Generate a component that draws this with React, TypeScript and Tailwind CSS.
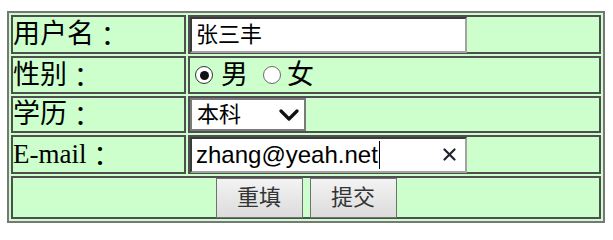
import React from "react";

const labelFont = { fontFamily: '"Liberation Serif", "Noto Sans CJK SC", serif' };
const colonFont = { fontFamily: '"Noto Sans CJK TC", "Noto Sans CJK SC", serif' };
const inputFont = { fontFamily: '"Liberation Sans", "Noto Sans CJK SC", sans-serif' };

function Label({ text }: { text: string }) {
  return (
    <div className="flex h-full w-[171px] items-center text-[27px] leading-none text-black" style={labelFont}>
      <span>{text}</span>
      <span style={colonFont}>：</span>
    </div>
  );
}

function Radio({ checked }: { checked: boolean }) {
  return (
    <span
      className={
        checked
          ? "flex h-[18px] w-[18px] shrink-0 items-center justify-center rounded-full border-[1.5px] border-[#333] bg-white"
          : "flex h-[18px] w-[18px] shrink-0 items-center justify-center rounded-full border-[1.5px] border-[#6a6a6a] bg-white"
      }
    >
      {checked && <span className="h-[9px] w-[9px] rounded-full bg-[#111]" />}
    </span>
  );
}

export default function App() {
  return (
    <div className="bg-white w-[613px] h-[240px] pt-[11px] pl-[7px]">
      <table className="border-separate border-spacing-[2px] border-2 border-[#777] bg-[#ccffcc]">
        <tbody>
          <tr>
            <td className="p-0 border-2 border-[#4f4f4f]">
              <div className="h-[35px]">
                <Label text="用户名" />
              </div>
            </td>
            <td className="p-0 border-2 border-[#4f4f4f]">
              <div className="flex h-[35px] w-[409px] items-center">
                <div
                  className="flex h-[36px] w-[277px] items-center border-2 border-t-[#3a3a3a] border-l-[#3a3a3a] border-r-[#a3a3a3] border-b-[#a3a3a3] bg-white pl-[4px] text-[22px] text-black"
                  style={inputFont}
                >
                  张三丰
                </div>
              </div>
            </td>
          </tr>
          <tr>
            <td className="p-0 border-2 border-[#4f4f4f]">
              <div className="h-[34px]">
                <Label text="性别" />
              </div>
            </td>
            <td className="p-0 border-2 border-[#4f4f4f]">
              <div className="flex h-[34px] w-[409px] items-center pl-[5px] text-[27px] leading-none text-black" style={labelFont}>
                <Radio checked />
                <span className="ml-[8px]">男</span>
                <span className="ml-[15px] flex items-center">
                  <Radio checked={false} />
                </span>
                <span className="ml-[6px]">女</span>
              </div>
            </td>
          </tr>
          <tr>
            <td className="p-0 border-2 border-[#4f4f4f]">
              <div className="h-[33px]">
                <Label text="学历" />
              </div>
            </td>
            <td className="p-0 border-2 border-[#4f4f4f]">
              <div className="flex h-[33px] w-[409px] items-center">
                <div
                  className="flex h-[33px] w-[116px] items-center justify-between border-2 border-[#7a7a7a] bg-white pl-[5px] pr-[5px] text-[22px] text-black"
                  style={inputFont}
                >
                  <span>本科</span>
                  <svg width="20" height="12" viewBox="0 0 20 12" fill="none">
                    <path d="M2 2 L10 10 L18 2" stroke="#111" strokeWidth="3.2" strokeLinecap="round" strokeLinejoin="round" />
                  </svg>
                </div>
              </div>
            </td>
          </tr>
          <tr>
            <td className="p-0 border-2 border-[#4f4f4f]">
              <div className="h-[35px]">
                <Label text="E-mail" />
              </div>
            </td>
            <td className="p-0 border-2 border-[#4f4f4f]">
              <div className="flex h-[35px] w-[409px] items-center">
                <div
                  className="flex h-[36px] w-[277px] items-center border-2 border-t-[#3a3a3a] border-l-[#3a3a3a] border-r-[#a3a3a3] border-b-[#a3a3a3] bg-white pl-[4px] pr-[9px] text-[24px] text-black"
                  style={inputFont}
                >
                  <span className="leading-none">zhang@yeah.net</span>
                  <span className="ml-[1px] h-[28px] w-[1px] bg-black" />
                  <span className="flex-1" />
                  <svg width="13" height="13" viewBox="0 0 13 13" fill="none">
                    <path d="M1.5 1.5 L11.5 11.5 M11.5 1.5 L1.5 11.5" stroke="#1f2330" strokeWidth="2.2" strokeLinecap="round" />
                  </svg>
                </div>
              </div>
            </td>
          </tr>
          <tr>
            <td colSpan={2} className="p-0 border-2 border-[#4f4f4f]">
              <div className="flex h-[39px] items-center justify-center gap-[7px]">
                <button
                  className="h-[40px] w-[87px] border-[1.5px] border-[#707070] bg-gradient-to-b from-[#f3f3f3] to-[#dcdcdc] text-[22px] text-[#333]"
                  style={inputFont}
                >
                  重填
                </button>
                <button
                  className="h-[40px] w-[87px] border-[1.5px] border-[#707070] bg-gradient-to-b from-[#f3f3f3] to-[#dcdcdc] text-[22px] text-[#333]"
                  style={inputFont}
                >
                  提交
                </button>
              </div>
            </td>
          </tr>
        </tbody>
      </table>
    </div>
  );
}
